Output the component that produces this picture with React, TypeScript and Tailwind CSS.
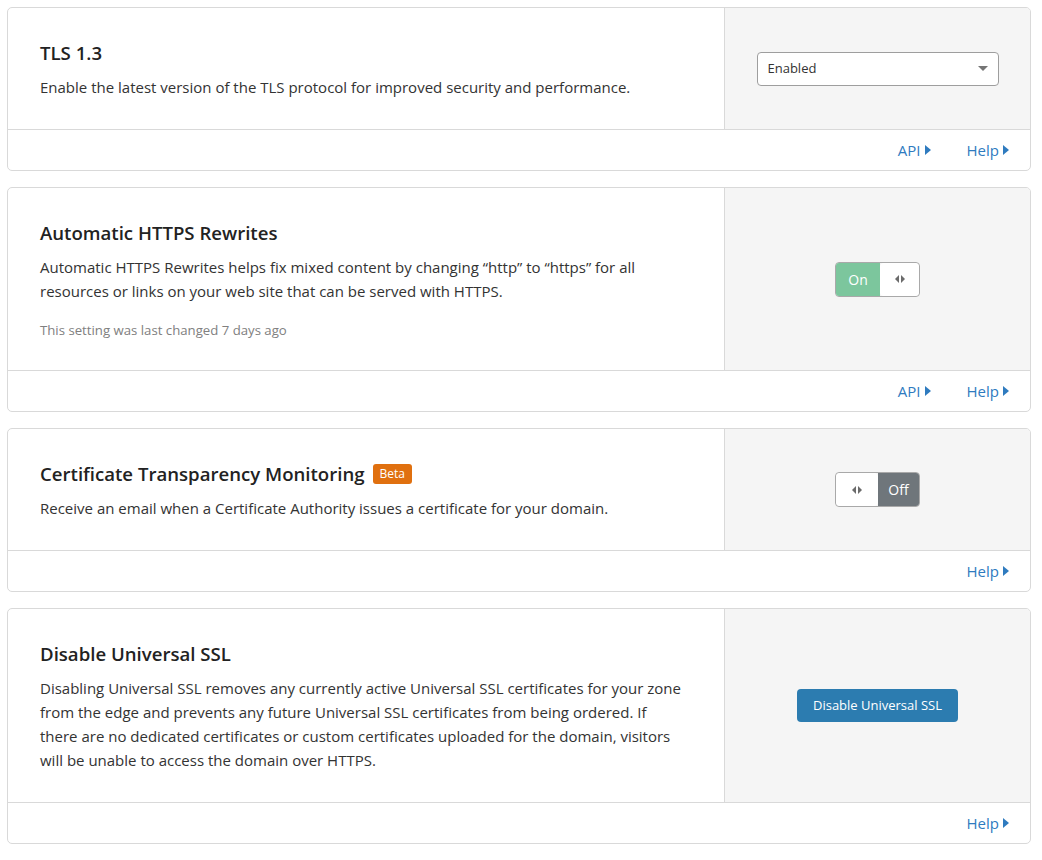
import React from 'react';

const FONT = { fontFamily: '"Open Sans", "Noto Sans", sans-serif' };

function Caret() {
  return (
    <svg width="6" height="10" viewBox="0 0 6 10" className="ml-1 inline-block">
      <path d="M0 0 L6 5 L0 10 Z" fill="currentColor" />
    </svg>
  );
}

function Arrows() {
  return (
    <svg width="10" height="8" viewBox="0 0 10 8">
      <path d="M4 0 L0 4 L4 8 Z" fill="#6b6b6b" />
      <path d="M6 0 L10 4 L6 8 Z" fill="#6b6b6b" />
    </svg>
  );
}

function Toggle({ on }: { on: boolean }) {
  return (
    <div className="flex h-[35px] w-[85px] overflow-hidden rounded-[4px] border border-[#a9a9a9] text-[14px]">
      {on ? (
        <>
          <div className="flex w-[44px] items-center justify-center bg-[#7cc69d] text-white">On</div>
          <div className="flex flex-1 items-center justify-center rounded-[4px] bg-white">
            <Arrows />
          </div>
        </>
      ) : (
        <>
          <div className="flex w-[42px] items-center justify-center rounded-[4px] bg-white">
            <Arrows />
          </div>
          <div className="flex flex-1 items-center justify-center bg-[#6f767b] text-white">Off</div>
        </>
      )}
    </div>
  );
}

interface CardProps {
  title: React.ReactNode;
  children: React.ReactNode;
  control: React.ReactNode;
  api?: boolean;
}

function Card({ title, children, control, api }: CardProps) {
  return (
    <div className="overflow-hidden rounded-[5px] border border-[#d9d9d9] bg-white">
      <div className="flex border-b border-[#d9d9d9]">
        <div className="flex w-[716px] flex-col justify-center pb-[30px] pl-[32px] pr-[40px] pt-[31px]">
          <h3 className="flex items-center text-[18.6px] font-semibold leading-[28px] text-[#222]">{title}</h3>
          <div className="mt-[8px] text-[15px] leading-[24px] text-[#333]">{children}</div>
        </div>
        <div className="flex flex-1 items-center justify-center border-l border-[#d9d9d9] bg-[#f5f5f5]">
          {control}
        </div>
      </div>
      <div className="flex h-[40px] items-center justify-end gap-[36px] pr-[21px] text-[15px] text-[#2f7bbf]">
        {api && (
          <span className="flex items-center">
            API
            <Caret />
          </span>
        )}
        <span className="flex items-center">
          Help
          <Caret />
        </span>
      </div>
    </div>
  );
}

export default function App() {
  return (
    <div className="min-h-[860px] bg-white px-[7px] pt-[7px]" style={FONT}>
      <div className="flex w-[1024px] flex-col gap-[16px]">
        <Card
          title="TLS 1.3"
          api
          control={
            <div className="flex h-[34px] w-[242px] items-center justify-between rounded-[4px] border border-[#9e9e9e] bg-white pl-[10px] pr-[10px] text-[13px] text-[#333]">
              <span>Enabled</span>
              <svg width="10" height="6" viewBox="0 0 10 6">
                <path d="M0 0 L10 0 L5 5 Z" fill="#757575" />
              </svg>
            </div>
          }
        >
          Enable the latest version of the TLS protocol for improved security and performance.
        </Card>

        <Card title="Automatic HTTPS Rewrites" api control={<Toggle on />}>
          <p>
            Automatic HTTPS Rewrites helps fix mixed content by changing “http” to “https” for all resources or links on your web site that can be served with HTTPS.
          </p>
          <p className="mt-[17px] text-[13.2px] leading-[20px] text-[#808080]">This setting was last changed 7 days ago</p>
        </Card>

        <Card
          title={
            <>
              Certificate Transparency Monitoring
              <span className="ml-[8px] rounded-[3px] bg-[#e0700f] px-[7px] text-[12px] font-normal leading-[20px] text-white">
                Beta
              </span>
            </>
          }
          control={<Toggle on={false} />}
        >
          Receive an email when a Certificate Authority issues a certificate for your domain.
        </Card>

        <Card
          title="Disable Universal SSL"
          control={
            <button className="h-[33px] w-[161px] rounded-[4px] bg-[#2c7cb0] text-[13px] text-white">
              Disable Universal SSL
            </button>
          }
        >
          Disabling Universal SSL removes any currently active Universal SSL certificates for your zone from the edge and prevents any future Universal SSL certificates from being ordered. If there are no dedicated certificates or custom certificates uploaded for the domain, visitors will be unable to access the domain over HTTPS.
        </Card>
      </div>
    </div>
  );
}
